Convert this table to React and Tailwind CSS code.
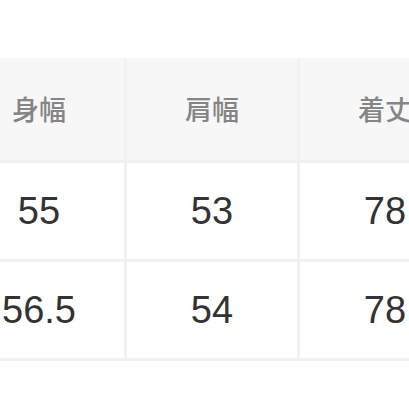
import React from "react";

const HEADERS = ["身幅", "肩幅", "着丈"];
const ROWS = [
  ["55", "53", "78"],
  ["56.5", "54", "78"],
];

export default function App() {
  return (
    <div className="w-[409px] h-[409px] overflow-hidden bg-white">
      <div className="mt-[58px] ml-[-46px] grid grid-cols-[170px_170px_170px] gap-[3px] bg-[#f1f1f1] pb-[3px] w-max">
        {HEADERS.map((h) => (
          <div
            key={h}
            className="h-[102px] bg-[#f7f7f7] flex items-center justify-center text-[27px] font-medium text-[#858585] font-['Noto_Sans_CJK_JP',sans-serif]"
          >
            {h}
          </div>
        ))}
        {ROWS.map((row, i) =>
          row.map((v, j) => (
            <div
              key={i + "-" + j}
              className="h-[96px] bg-white flex items-center justify-center text-[38px] text-[#333333] font-['Liberation_Sans',Arial,sans-serif]"
            >
              {v}
            </div>
          ))
        )}
      </div>
    </div>
  );
}
